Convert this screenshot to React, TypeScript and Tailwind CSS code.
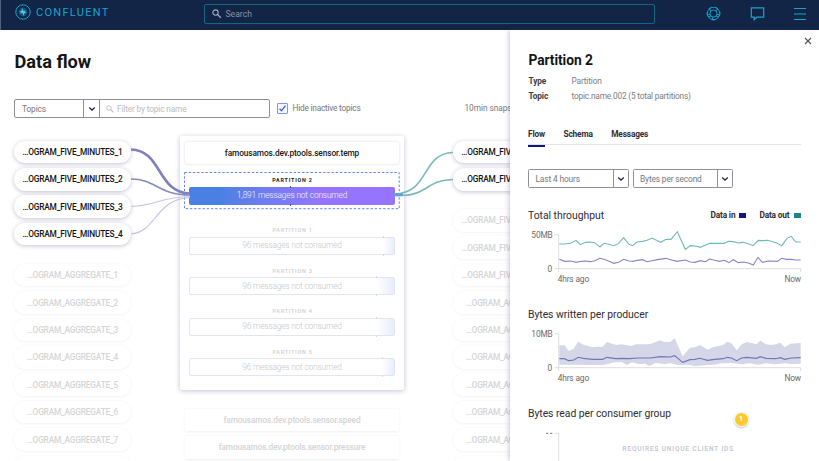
import React from 'react';

const GROUP_ACTIVE = ['FIVE_MINUTES_1', 'FIVE_MINUTES_2', 'FIVE_MINUTES_3', 'FIVE_MINUTES_4'];
const GROUP_IDLE = [1, 2, 3, 4, 5, 6, 7, 8].map((n) => `AGGREGATE_${n}`);

function Pill({ name, idle = false }: { name: string; idle?: boolean }) {
  return (
    <div
      className={
        'flex h-[22.6px] w-[117px] shrink-0 items-center justify-center rounded-full bg-white pt-[0.5px] text-[8.3px] font-medium leading-none tracking-[-0.18px] ' +
        (idle
          ? 'text-[#d5d5d7] shadow-[0_0.5px_3px_rgba(40,40,110,0.07)]'
          : 'text-[#111] shadow-[0_1px_4px_rgba(40,40,110,0.28)]')
      }
    >
      …OGRAM_{name}
    </div>
  );
}

function Magnifier({ className }: { className: string }) {
  return (
    <svg viewBox="0 0 10 10" className={className} fill="none" stroke="currentColor">
      <circle cx="3.7" cy="3.7" r="2.8" strokeWidth="1.1" />
      <path d="M5.9 5.9 9.3 9.3" strokeWidth="1.4" />
    </svg>
  );
}

function Chevron() {
  return (
    <svg viewBox="0 0 8 6" className="h-[6px] w-[8px]" fill="none" stroke="#26264a" strokeWidth="1.3">
      <path d="M1.2 1.6 4 4.1 6.8 1.6" />
    </svg>
  );
}

function Select({ label }: { label: string }) {
  return (
    <div className="flex h-[19px] w-[100.5px] rounded-[1.5px] border border-[#8f8f9f] text-[8.4px] tracking-[-0.15px] text-[#77777b]">
      <div className="flex flex-1 items-center pl-[6.5px] pt-px">{label}</div>
      <div className="flex w-[15px] items-center justify-center border-l border-[#8f8f9f]">
        <Chevron />
      </div>
    </div>
  );
}

function Partition({ n, fill }: { n: number; fill: string }) {
  return (
    <div className="h-[40.5px] px-[9px]">
      <div className="flex h-[12px] items-center justify-center pl-[1px] text-[5.4px] font-medium tracking-[0.8px] text-[#cdcdd0]">
        PARTITION {n}
      </div>
      <div className="relative flex h-[18px] items-center justify-center rounded-[2px] border border-[#e2e4f2] text-[8.3px] font-light tracking-[-0.16px] text-[#c6c6c9]">
        <div className={'absolute inset-y-0 right-0 bg-linear-to-r from-white to-[#e9edfb] ' + fill}>
          <i className="absolute -top-[2px] left-0 h-[2px] w-px bg-[#d8d8e2]" />
          <i className="absolute -bottom-[2px] left-0 h-[2px] w-px bg-[#d8d8e2]" />
        </div>
        <span className="relative">96 messages not consumed</span>
      </div>
    </div>
  );
}

function Axis({ top, label }: { top: number; label: string }) {
  return (
    <>
      <path d={`M120 ${top}H132V${top + 112}M120 ${top + 102}H858V${top + 112}`} fill="none" stroke="#d8d8dc" strokeWidth="2.5" />
      <g fill="#68686c" fontSize="25" letterSpacing="-0.4">
        <text x="114" y={top + 9} textAnchor="end">{label}</text>
        <text x="112" y={top + 111} textAnchor="end">0</text>
        <text x="129" y={top + 142}>4hrs ago</text>
        <text x="859" y={top + 142} textAnchor="end">Now</text>
      </g>
    </>
  );
}

function Header() {
  return (
    <header className="flex h-[30px] shrink-0 items-start border-l border-[#51617c] bg-[#122546] text-[#1ba3cc]">
      <svg viewBox="0 0 16 16" className="ml-[14px] mt-[4px] h-[16px] w-[16px] shrink-0">
        <circle cx="8" cy="8" r="7.2" fill="none" stroke="currentColor" strokeWidth="1" />
        <circle cx="8" cy="8" r="4.4" fill="currentColor" opacity="0.35" />
        <path d="M7 3.8 8.3 6.8H11L9.6 8 12.2 8.6 9.3 9.2 9 12.2 7.7 9.2H5L6.4 8 3.8 7.4 6.7 6.8Z" fill="#45cdea" />
      </svg>
      <span className="ml-[5px] mt-[6px] w-[168px] shrink-0 text-[11px] leading-[13px] tracking-[1.3px]">CONFLUENT</span>
      <div className="mt-[4px] flex h-[20px] w-[451px] shrink-0 items-center rounded-[2px] border border-[#156587] pl-[7px]">
        <Magnifier className="h-[9.5px] w-[9.5px] text-[#a4b1c5]" />
        <span className="ml-[4px] pt-px text-[8.6px] text-[#8592a8]">Search</span>
      </div>
      <div className="ml-[51px] mt-[6px] flex h-[15px] items-center">
        <svg viewBox="0 0 15 15" className="h-[15px] w-[15px]" fill="none" stroke="currentColor" strokeWidth="0.9">
          <circle cx="7.5" cy="7.5" r="6.2" />
          <circle cx="7.5" cy="7.5" r="3.5" />
          <path d="M5.4 1.1 3.1 2.6 5 5M9.6 1.1 12 2.8 10 5M14 6l-.2 3.2-2.9-.9M1 6l.3 3.1 2.9-.8M9.3 13.8 6 13.9 7 11M2.2 11 5 10M12.8 11 10 10" />
        </svg>
        <svg viewBox="0 0 15 15" className="ml-[28.5px] h-[15px] w-[15px]" fill="none" stroke="currentColor" strokeWidth="1.2">
          <path d="M1.3 1.8h12.4v9.4H6.8L4.2 13.7v-2.5H1.3Z" />
        </svg>
        <svg viewBox="0 0 12 14" className="ml-[29.5px] h-[14px] w-[12px]" fill="none" stroke="currentColor" strokeWidth="1.1">
          <path d="M0 1.5h12M0 7h12M0 12.5h12" />
        </svg>
      </div>
    </header>
  );
}

function FlowCanvas() {
  return (
    <div className="relative -ml-[14px] mt-[18px] flex w-[585px] items-start pl-[14px]">
      <div className="flex w-[117px] shrink-0 flex-col gap-[4.8px] pt-[4.7px]">
        {GROUP_ACTIVE.map((n) => <Pill key={n} name={n} />)}
        <div className="h-[8.8px]" />
        {GROUP_IDLE.map((n) => <Pill key={n} name={n} idle />)}
      </div>

      <div className="ml-[49px] w-[224px] shrink-0">
        <div className="h-[254px] rounded-[2px] bg-white px-[4px] pt-[6px] shadow-[0_1px_5px_rgba(50,50,130,0.3)]">
          <div className="mx-[1px] flex h-[22px] items-center justify-center rounded-[3px] text-[8.3px] font-medium tracking-[-0.1px] text-[#161616] shadow-[0_0_2.5px_rgba(40,40,110,0.18)]">
            famousamos.dev.ptools.sensor.temp
          </div>
          <div className="relative mt-[8px] h-[38px] px-[5px] pt-px">
            <svg viewBox="0 0 216 38" className="absolute inset-0 h-[38px] w-[216px]">
              <rect x="0.5" y="0.5" width="214.7" height="36.2" fill="none" stroke="#6683e6" strokeWidth="1" strokeDasharray="2.4 1.8" />
            </svg>
            <div className="flex h-[13.5px] items-center justify-center pl-[1px] text-[5.4px] font-bold tracking-[0.8px] text-[#222]">PARTITION 2</div>
            <div className="relative flex h-[18px] items-center justify-center rounded-[2px] bg-linear-to-r from-[#4a80e4] from-15% to-[#9575ff] to-65% text-[8.4px] font-light tracking-[-0.17px] text-white/90">
              1,891 messages not consumed
              <i className="absolute -top-px left-[101px] h-[2px] w-px bg-[#4b51a8]" />
              <i className="absolute -bottom-px left-[101px] h-[2px] w-px bg-[#4b51a8]" />
            </div>
          </div>
          <div className="-ml-[4px] -mr-[4px] mt-[14.5px]">
            <Partition n={1} fill="w-[11px]" />
            <Partition n={3} fill="w-[18px]" />
            <Partition n={4} fill="w-[18px]" />
            <Partition n={5} fill="w-[12px]" />
          </div>
        </div>
        <div className="mx-[5px] mt-[18.5px] flex flex-col gap-[5px]">
          {['speed', 'pressure'].map((s) => (
            <div key={s} className="flex h-[22.5px] items-center justify-center rounded-[2px] text-[8.3px] font-medium tracking-[-0.12px] text-[#d4d4d6] shadow-[0_0.5px_3px_rgba(40,40,110,0.07)]">
              famousamos.dev.ptools.sensor.{s}
            </div>
          ))}
        </div>
      </div>

      <div className="ml-[49px] flex w-[117px] shrink-0 flex-col gap-[4.8px] pt-[4.7px]">
        <Pill name="FIVE_MINUTES_1" />
        <Pill name="FIVE_MINUTES_2" />
        <div className="h-[8.8px]" />
        <Pill name="FIVE_MINUTES_3" idle />
        <Pill name="FIVE_MINUTES_4" idle />
        <Pill name="FIVE_MINUTES_5" idle />
        {GROUP_IDLE.slice(0, 7).map((n) => <Pill key={n} name={n} idle />)}
      </div>

      {/* Links between producers, the selected partition and its consumers */}
      <svg viewBox="0 136 500 120" className="pointer-events-none absolute left-0 top-0 h-[120px] w-[500px]" fill="none">
        <path d="M131 149.5C162 150 157 193 190 193.5" stroke="#7f81bb" strokeWidth="2.6" />
        <path d="M131 179C156 179 158 195 190 195" stroke="#8789c0" strokeWidth="1.5" />
        <path d="M131 206.5C156 206 160 197 190 196.5" stroke="#c6c6e1" strokeWidth="1.1" />
        <path d="M131 233.7C156 233 155 199 190 197.5" stroke="#c0c0dd" strokeWidth="1.1" />
        <path d="M394 194C430 194 421 153 453 152.5" stroke="#78b9bd" strokeWidth="1.6" />
        <path d="M394 195.5C430 197 424 180 453 179.5" stroke="#78b9bd" strokeWidth="1.6" />
        <path d="M394 194.7H403" stroke="#5f9edb" strokeWidth="2.4" />
      </svg>
    </div>
  );
}

function DetailPanel() {
  return (
    <aside className="relative flex w-[309px] shrink-0 flex-col bg-white pl-[18px] shadow-[-1px_0_5px_rgba(50,50,120,0.28)] *:shrink-0">
      <svg viewBox="0 0 8 8" className="absolute left-[294px] top-[7px] h-[8px] w-[8px]" stroke="#55555c" strokeWidth="1.2">
        <path d="M1 1 7 7M7 1 1 7" />
      </svg>
      <h2 className="mt-[21px] h-[18px] pl-[0.5px] text-[13.8px] font-bold leading-[18px] tracking-[-0.08px] text-[#151515]">Partition 2</h2>
      <dl className="mt-[5px] grid grid-cols-[43.5px_1fr] text-[8.3px] leading-[15px] tracking-[-0.15px] text-[#7c7c80]">
        <dt className="pl-[0.5px] font-bold text-[#3c3c40]">Type</dt>
        <dd>Partition</dd>
        <dt className="pl-[0.5px] font-bold text-[#3c3c40]">Topic</dt>
        <dd className="tracking-[-0.19px]">topic.name.002 (5 total partitions)</dd>
      </dl>
      <nav className="mt-[22px] flex h-[19px] w-[273px] gap-[18.5px] border-b border-[#e4e4e8] text-[8.3px] font-bold leading-[17px] tracking-[-0.15px] text-[#2d2d31]">
        <span className="h-[20.5px] border-b-2 border-[#101880]">Flow</span>
        <span>Schema</span>
        <span>Messages</span>
      </nav>
      <div className="mt-[24px] flex gap-[4px]">
        <Select label="Last 4 hours" />
        <Select label="Bytes per second" />
      </div>
      <div className="mt-[18px] flex h-[18px] w-[273px] items-center text-[10.4px] text-[#2d2d31]">
        <h3 className="flex-1 pt-px tracking-[-0.03px]">Total throughput</h3>
        <div className="flex items-center pt-px text-[8.3px] font-bold tracking-[-0.15px]">
          Data in
          <i className="ml-[4px] h-[5px] w-[7px] bg-[#101880]" />
          <span className="ml-[13px]">Data out</span>
          <i className="ml-[4.5px] h-[5px] w-[7px] bg-[#1c8484]" />
        </div>
      </div>
      <svg viewBox="40 75 822 178.5" className="mt-px h-[59.5px] w-[274px] overflow-visible">
        <Axis top={104} label="50MB" />
        <path d="M134 132H150L168 130 184 121 197 134 212 127 226 126 240 128 256 141 268 130 282 133 298 137 311 131 327 113 343 133 354 137 367 126 384 124 397 121 412 114 438 127 454 118H469L488 95 512 148 527 137 541 138 557 142 571 136 585 130H628L642 124 656 125 671 129 686 127 701 131 715 137 731 121 743 122 759 121 774 125 788 130 801 137 817 115 830 109 843 126H858" fill="none" stroke="#6fb9b7" strokeWidth="3.3" />
        <path d="M134 178 150 184 168 183 184 187 200 184 212 183 227 185 241 182 255 175 268 178 283 184 298 190 312 187 327 178 343 183 355 184 368 181 384 179 397 185 412 182 428 179 454 175 468 179 487 184 512 180 527 186 541 187 557 182 572 185 585 177 600 181 614 184 629 181 643 188 656 179 671 188 687 186 701 189 716 195 730 172 743 187 762 183 788 184 801 175 815 178H830L843 180H858" fill="none" stroke="#8587c5" strokeWidth="3.3" />
      </svg>
      <h3 className="mt-[21.5px] h-[18px] text-[10.4px] leading-[17px] tracking-[-0.05px] text-[#2d2d31]">Bytes written per producer</h3>
      <svg viewBox="40 102 822 178.5" className="h-[59.5px] w-[274px] overflow-visible">
        <path d="M134 166H150L162 183 177 177 190 155 206 164 220 168 234 172 248 170 263 171 277 156 291 161 306 165 320 163 350 168 363 163H393L407 162 421 157 436 151 450 156 467 156 480 145 504 199 526 173 541 172 555 165 579 179 596 171 625 165 638 155 650 160 666 181 681 163 696 156 711 159 725 163 737 152 754 163 769 165 783 163 797 158 810 172 827 161 858 159V221L830 222 810 220 780 223 755 220 730 224 706 220 680 223 650 219 620 220 600 224 570 226 541 229 520 224 490 225 466 220 450 222 421 219 405 228 391 221 371 222 352 217 337 225 321 216 300 217 265 225 220 225 180 224 134 224Z" fill="#d5d6e8" />
        <Axis top={131} label="10MB" />
        <path d="M134 206H149L162 212 177 210 191 202 206 205 234 208 264 208 277 202 304 206 320 205 345 206 370 204H407L436 200 467 201 480 197 504 217 526 209 541 208 555 205 579 211 600 208 625 206 638 202 650 204 666 212 681 204 696 202 725 205 737 200 754 205 783 206 797 203 810 208 830 204 858 203" fill="none" stroke="#7176b7" strokeWidth="3.3" />
      </svg>
      <h3 className="mt-[21.5px] h-[18px] text-[10.4px] leading-[17px] tracking-[-0.05px] text-[#2d2d31]">Bytes read per consumer group</h3>
      <div className="flex h-[38px] overflow-hidden">
        <svg viewBox="40 129 99 117" className="h-[39px] w-[33px] shrink-0">
          <path d="M120 160H132V246" fill="none" stroke="#d8d8dc" strokeWidth="2.5" />
          <path d="M94 160h7M106 160h7" stroke="#77777b" strokeWidth="3" />
        </svg>
        <span className="ml-[61.5px] mt-[21px] text-[6.5px] font-medium leading-[10px] tracking-[0.84px] text-[#bfc2d2]">REQUIRES UNIQUE CLIENT IDS</span>
      </div>
      <div className="absolute left-[223.5px] top-[382px] flex h-[15px] w-[15px] items-center justify-center rounded-full border border-white bg-[#fcc92f] text-[7px] font-bold text-white shadow-[0_1px_2px_rgba(0,0,0,0.22)]">1</div>
    </aside>
  );
}

export default function App() {
  return (
    <div className="flex h-[461px] w-[819px] flex-col overflow-hidden whitespace-nowrap bg-white font-[Roboto,sans-serif]">
      <Header />
      <div className="flex h-[431px]">
        <main className="w-[510px] shrink-0 overflow-hidden pl-[14px]">
          <h1 className="mt-[20px] h-[24px] pl-[0.5px] text-[18.2px] font-bold leading-[24px] text-[#151515]">Data flow</h1>
          <div className="mt-[25px] flex h-[19px] items-center text-[8.3px] tracking-[-0.1px] text-[#77777b]">
            <div className="flex h-[19px] w-[256px] shrink-0 rounded-[2px] border border-[#8f8f98]">
              <div className="flex w-[68px] items-center pl-[7px] pt-px">Topics</div>
              <div className="flex w-[17px] items-center justify-center border-x border-[#8f8f98]">
                <Chevron />
              </div>
              <div className="flex items-center pl-[6px] pt-px tracking-[-0.15px] text-[#bcbcc0]">
                <Magnifier className="mr-[3px] h-[8px] w-[8px]" />
                Filter by topic name
              </div>
            </div>
            <div className="ml-[7px] flex h-[11px] w-[11px] shrink-0 items-center justify-center rounded-[1px] border border-[#8196e4] bg-[#f5f7ff]">
              <svg viewBox="0 0 9 9" className="h-[9px] w-[9px]" fill="none" stroke="#3c62dc" strokeWidth="1.3">
                <path d="M1.5 4.8 3.5 6.8 7.5 1.6" />
              </svg>
            </div>
            <span className="ml-[4.5px] w-[172px] shrink-0 text-[8.3px] tracking-[-0.22px]">Hide inactive topics</span>
            <span className="text-[8.3px] tracking-[-0.05px]">10min snapshot</span>
          </div>
          <FlowCanvas />
        </main>
        <DetailPanel />
      </div>
    </div>
  );
}
